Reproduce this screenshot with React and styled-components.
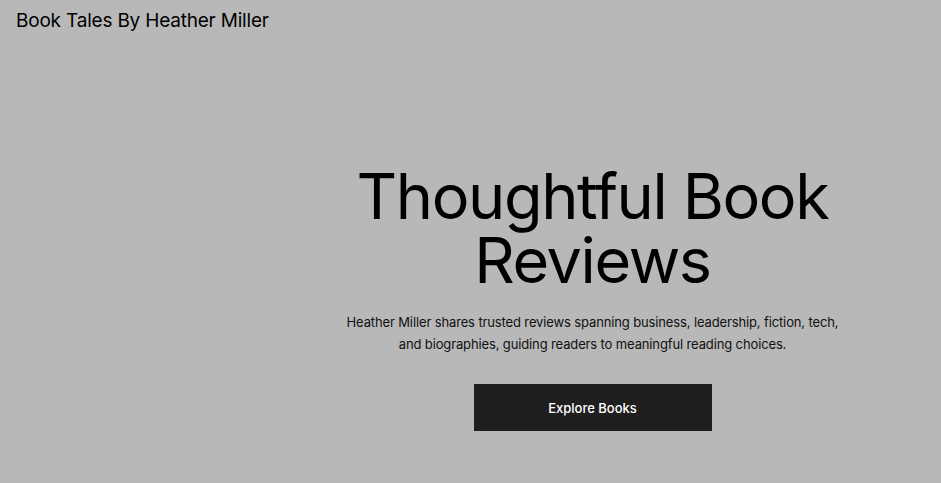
import React from 'react'
import styled, { createGlobalStyle } from 'styled-components'

const GlobalStyle = createGlobalStyle`
  html, body {
    margin: 0;
    padding: 0;
    background: #b8b8b8;
    font-family: Inter, "Noto Sans", sans-serif;
    color: #000;
  }
`

const Page = styled.div`
  min-height: 483px;
  display: flex;
  flex-direction: column;
`

const Header = styled.header`
  padding: 10px 16px;
`

const Brand = styled.div`
  font-size: 19px;
  font-weight: 400;
  letter-spacing: -0.2px;
  line-height: 22px;
`

const Main = styled.main`
  display: flex;
  flex: 1;
`

const Spacer = styled.div`
  width: 244px;
  flex-shrink: 0;
`

const Hero = styled.section`
  flex: 1;
  display: flex;
  flex-direction: column;
  align-items: center;
  text-align: center;
  padding-top: 122px;
`

const Title = styled.h1`
  margin: 0;
  font-size: 63px;
  font-weight: 400;
  line-height: 64px;
  letter-spacing: -1.4px;
`

const Lead = styled.p`
  margin: 19px 0 0;
  width: 500px;
  font-size: 13px;
  line-height: 22px;
  letter-spacing: -0.13px;
  color: #111;
`

const Button = styled.button`
  margin-top: 29px;
  width: 238px;
  height: 47px;
  border: none;
  background: #1f1f1f;
  color: #fff;
  font-family: inherit;
  font-size: 13px;
  font-weight: 500;
  cursor: pointer;
`

function App() {
  return (
    <Page>
      <GlobalStyle />
      <Header>
        <Brand>Book Tales By Heather Miller</Brand>
      </Header>
      <Main>
        <Spacer />
        <Hero>
          <Title>
            Thoughtful Book
            <br />
            Reviews
          </Title>
          <Lead>
            Heather Miller shares trusted reviews spanning business, leadership, fiction, tech,
            and biographies, guiding readers to meaningful reading choices.
          </Lead>
          <Button>Explore Books</Button>
        </Hero>
      </Main>
    </Page>
  )
}

export default App
